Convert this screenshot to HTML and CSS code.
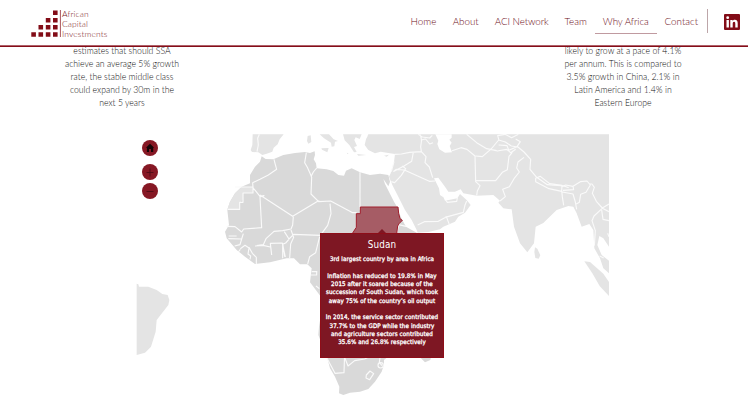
FILE: index.html
```html
<!DOCTYPE html>
<html lang="en">
<head>
<meta charset="utf-8">
<title>African Capital Investments</title>
<link rel="stylesheet" href="styles.css">
</head>
<body>
<header class="header">
  <a class="logo">
    <svg class="logo-mark" viewBox="0 0 31 28" width="31" height="28">
      <path class="mark" d="M22 .5h4.6v4.6H22zM14.800 8h4.600v4.600h-4.600zM22 8h4.600v4.600H22zM7.500 15h4.600v4.600H7.500zM14.800 15h4.600v4.600h-4.600zM22 15h4.600v4.600H22zM.3 22.200h4.600v4.600H.3zM7.500 22.200h4.600v4.600H7.500zM14.800 22.200h4.600v4.600h-4.600zM22 22.200h4.600v4.600H22z"/>
      <path class="mark-line" d="M29.400 0v27"/>
    </svg>
    <span class="logo-text">African<br>Capital<br>Investments</span>
  </a>
  <nav class="nav">
    <a>Home</a><a>About</a><a>ACI Network</a><a>Team</a><a class="active">Why Africa</a><a>Contact</a>
  </nav>
  <span class="divider"></span>
  <svg class="linkedin" viewBox="0 0 16 16" width="16" height="16">
    <rect class="mark" width="16" height="16" rx="1"/>
    <circle cx="3.700" cy="3.700" r="1.400" fill="#fff"/>
    <path fill="#fff" d="M2.500 6h2.400v7.600H2.500zM6.300 6h2.300v1.050c.5-.8 1.300-1.250 2.300-1.250 2 0 2.800 1.300 2.800 3.400v4.400h-2.400V9.700c0-1.100-.3-1.900-1.200-1.900-1 0-1.400.8-1.400 1.900v3.900H6.300z"/>
  </svg>
</header>
<main>
  <section class="facts">
    <p>estimates that should SSA<br>achieve an average 5% growth<br>rate, the stable middle class<br>could expand by 30m in the<br>next 5 years</p>
    <p>likely to grow at a pace of 4.1%<br>per annum. This is compared to<br>3.5% growth in China, 2.1% in<br>Latin America and 1.4% in<br>Eastern Europe</p>
  </section>
  <section class="map">
    <svg class="world" viewBox="-237 12 1419 792" width="473" height="264">
      <g class="land">
        <path d="M-235 461l5 2 2 7 28 0 25 10 17 12 16 3 5 15-3 15-35 45-3 35-14 45-18 18-25 7z"/>
        <path d="M113 13H206L194 28 188 43 176 53 172 65 155 71 142 75 130 67 111 66 107 60 112 45z"/>
        <path d="M278 18l9-2 2 20-9 5-4-8zM314 13h28l14 15 13 5-9 2-2 14-8 1-2-12-21-13zM319 55l22-1-4 13-16-8zM384 13h56l-6 14-12-5-4 8 8 18-9 3 8 15-8 1-14-22-14-14zM426 72l28 3-24 2zM507 77l15-3-7 6zM395 68l6 2-4 2z"/>
        <path d="M460 13L453 28 449 45 460 60 480 70 497 65 520 69 540 72 537 95 527 130 522 140 530 160 532 165 550 200 570 240 590 270 605 300 608 308 640 306 675 298 685 290 720 275 730 260 750 248 767 225 755 210 735 192 727 205 690 212 680 190 685 202 675 195 672 175 657 145 670 143 690 170 700 185 720 185 737 178 745 190 785 197 835 195 855 212 850 218 865 235 890 238 897 290 915 340 937 367 957 340 962 290 985 279 1025 240 1060 228 1075 230 1085 250 1100 290 1123 282 1135 300 1138 355 1155 385 1165 415 1182 430V392L1160 375 1147 345 1153 318 1165 325 1182 350V13z"/>
        <path d="M960 352l7 4 9 20-5 10-10-2-3-18zM1108 394l17 2 40 35 17 25v42l-28-30-22-38z"/>
      </g>
      <path class="sea" d="M661 13L670 32 667 42 673 58 690 68 711 67 704 48 710 38 703 29 710 23 710 13z"/>
      <path class="sea" d="M444 18l15 2-12 5z"/>
      <g class="borders">
        <path d="M133 13l-5 12 2 20-4 20M615 13l5 17-3 20 2 15-35 2-25 5-20 1M617 30l15-3 12 15 10-4M610 13l12 8 22 3 8-8M619 65l14 15-3 18 13 13 10 32M595 66l-5 28-23 14-30 16M562 108l10 8-13 20-20 22-10-3M535 125l8-7 25 2 75 34 17-1M537 95l-8 30M608 285l20-10 42-1 25-14M690 262l55-15 5-22 5-12M695 262l8 22M692 210l5 7 28-3 2-10"/>
        <path d="M711 62l27-9 18 5 24 20 2 77 13 12-8 16-2 14M782 78l20 2 25-22 20 5 28-5 12 10 15-10M782 152l60 0 20-25 15-8 5-40 10-12M755 13l30 25 30 18 30 6M826 60l25-30 20 6 18 12 20 3 18 15 20 22-2 30 20 24 32 22 50 4 14 5M852 31l-4-14 22-4 20 10 20-10M851 45l25 2 6 16M902 27l14 8-10 15-28 12"/>
        <path d="M927 82l-18 14-4 18 8 12-16 20-14 24-20 8 8 22-16 13M962 145l14-6 28 22 37 5-1 18-38-8-40-21zM1040 170l12-5 22 4 2 10-32 2M1074 169l22-14 20-2 10 12-13 22-16 6-4 24-9 5M1040 182l2 18 4 26M1042 186l32 6 7 24 4 22M1123 162l8 0 7 10-6 18 12 24 18 20 20-12M1161 236l-24 22-6 14 10 30-3 45M1162 235l20 10M1160 240l4 28 18 4M1154 378l12 6M1178 310l4 10"/>
      </g>
      <path class="africa" d="M140 79L152 87 175 88 205 75 240 69 270 66 285 69 299 64 300 75 296 88 303 100 305 115 335 118 355 123 370 135 387 137 393 122 410 115 435 127 465 135 495 131 520 135 525 155 520 169 505 147 510 162 518 178 537 215 547 232 555 255 562 270 573 290 605 308 620 330 680 330 600 500 595 620 507 690V704L500 725 480 755 460 777 435 785 405 788 385 795 372 790 373 770 360 740 345 715 337 685 310 615 312 590 325 510 285 457 290 415 277 403 255 403 237 385 215 385 190 391 165 397 120 402 90 380 65 360 35 325 30 305 42 285 37 240 45 215 60 190 80 170 105 160 105 135 120 110 135 95zM615 682l15 15 16-7 2-10z"/>
      <path class="sahara" d="M80 171H114V189H84V207L72 222V238H37L45 215 60 190z"/>
      <g class="borders">
        <path d="M177 88l3 12 5 18-25 17-25 13-22 10 1 14M60 171h54v18H84v28H74v21H38M113 172l22 27 12-2-12 4 5 92-54 4-6 9-20-16-25-1M135 195l98 64 75-45 5-2M274 68l-5 30 8 14 9 20 4 10-2 50 23 23 36-2 66 35 12 0M289 138l6-12 10-12M435 127V239M235 260l-2 25-5 12-25 5-26 2-24 22-8 18-20 3M345 221l3 30-10 35-22 30-80-3-14 14-14-22M228 300l8 22-9 20-3 42M221 329l-9 10-9 4 0 42M170 375l-4-35 36-1 9 42M203 340l6 40M40 326l40 1 5-16M41 318h24M80 327l-5 17-16 4M76 356l14-10 12 8-3 18 8 6-2 10M76 358l-6 8M102 352l10 18 12 12v20M120 348l24-2 22 5M314 320l-12 48-18 12-6 22M290 425h17M288 435h17v-12M303 468l10 8M336 685l24 45 27-2 2-60M389 682l10 26 20-16 30-5 25-12M495 683l-2 14 8 10M454 735l11-12 11 8-12 18-11-5z"/>
        <circle cx="497" cy="706" r="8"/>
        <path d="M573 289l-22-5-5 24"/>
      </g>
      <path class="sudan" d="M436 231H549L551 250 555 266 562 271 553 280 548 288 545 312H411L424 292V251H436z"/>
    </svg>
    <div class="controls">
      <button class="ctl home"><svg viewBox="0 0 16 16" width="16" height="16"><path fill="#160406" d="M8 3.700l4.200 4.100h-1V12H9V9H7v3H4.900V7.800h-1z"/></svg></button>
      <button class="ctl"><svg viewBox="0 0 16 16" width="16" height="16"><path class="sign" d="M4.500 8.500h7M8 4.500v8"/></svg></button>
      <button class="ctl"><svg viewBox="0 0 16 16" width="16" height="16"><path class="sign" d="M4.500 8.500h7"/></svg></button>
    </div>
    <div class="tooltip">
      <h2>Sudan</h2>
      <p>3rd largest country by area in Africa</p>
      <p>Inflation has reduced to 19.8% in May<br>2015 after it soared because of the<br>succession of South Sudan, which took<br>away 75% of the country’s oil output</p>
      <p>In 2014, the service sector contributed<br>37.7% to the GDP while the industry<br>and agriculture sectors contributed<br>35.6% and 26.8% respectively</p>
    </div>
  </section>
</main>
</body>
</html>
```
FILE: styles.css
```css
* { box-sizing: border-box; }
body { margin: 0; width: 748px; height: 418px; overflow: hidden; background: #fff; font-family: Lato, "Open Sans", sans-serif; font-weight: 300; }
.header { height: 47px; border-bottom: 1px solid #850d18; box-shadow: inset 0 -1px 0 #b0626a; display: flex; align-items: flex-start; padding: 9px 8px 0 31px; background: #fff; }
.logo { display: flex; width: 110px; color: #7c1722; }
.logo-mark { flex: none; margin-top: 1px; }
.logo-text { font-size: 8.500px; line-height: 10.200px; white-space: nowrap; letter-spacing: .1px; }
.mark { fill: #820c17; }
.mark-line { stroke: #a9545d; stroke-width: 1; }
.nav { display: flex; margin-left: auto; margin-right: 1px; font-size: 9.800px; line-height: 24px; color: #6c0c17; }
.nav a { height: 25px; padding: 0 8px; white-space: nowrap; }
.nav a:nth-child(-n+2) { padding: 0 8.200px; }
.nav a:nth-child(3) { letter-spacing: -.1px; }
.nav .active { border-bottom: 1px solid #c09aa0; letter-spacing: -.1px; }
.divider { width: 1px; height: 24px; background: #bda6a9; margin-right: 16px; }
.linkedin { margin-top: 5px; }
.facts { display: flex; justify-content: space-between; padding: 0 55px 0 52px; height: 87px; }
.facts p { width: 140px; margin: -3px 0 0; text-align: center; white-space: nowrap; font-size: 8.700px; line-height: 13px; color: #111; }
.map { position: relative; margin-left: 136px; width: 473px; height: 264px; }
.world { display: block; }
.land { fill: #e4e4e4; }
.sea { fill: #fff; }
.africa { fill: #d9d9d9; }
.sahara { fill: #e4e4e4; }
.borders { fill: none; stroke: #fafafa; stroke-width: 3.4; stroke-linejoin: round; }
.sudan { fill: #a65c65; stroke: #a01f2d; stroke-width: 3; }
.controls { position: absolute; left: 6px; top: 6px; display: flex; flex-direction: column; gap: 3px; }
.ctl { width: 16px; height: 16px; padding: 0; border: 0; border-radius: 50%; background: #861824; display: block; }
.ctl svg { display: block; }
.home { margin-bottom: 5px; }
.sign { stroke: #530d16; stroke-width: 1; }
.tooltip { position: absolute; left: 184px; top: 99px; width: 124px; height: 124.500px; background: #7e1723; border: 1px solid #8e0d18; color: #fff; text-align: center; padding-top: 4px; font-family: "DejaVu Sans Condensed", "DejaVu Sans", sans-serif; font-stretch: condensed; font-weight: 400; font-size: 6.200px; line-height: 8.350px; white-space: nowrap; letter-spacing: .1px; -webkit-text-stroke: .3px #fff; }
.tooltip::before { content: ""; position: absolute; left: 57px; top: -5px; border: 4px solid transparent; border-top: 0; border-bottom-color: #7e1723; }
.tooltip h2 { margin: 0 0 4px; font-size: 9.800px; line-height: 13px; font-weight: 400; -webkit-text-stroke: 0; }
.tooltip p { margin: 0 0 8.350px; }
```
